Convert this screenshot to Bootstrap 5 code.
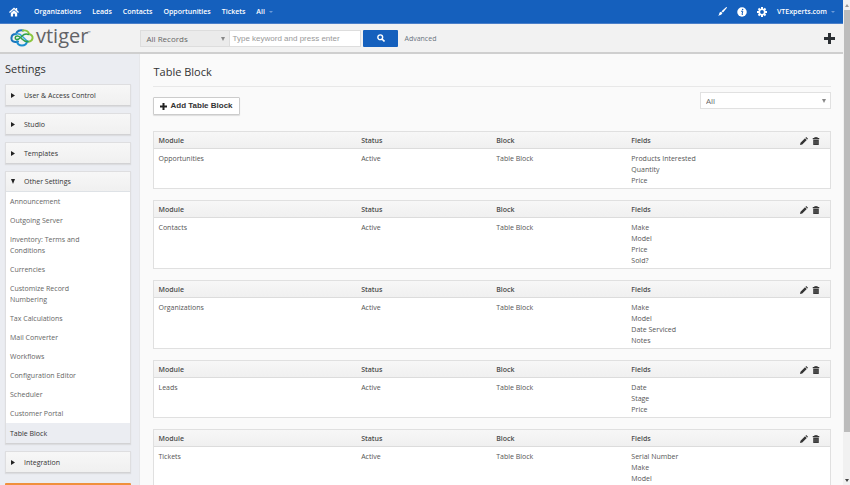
<!DOCTYPE html>
<html lang="en">
<head>
<meta charset="utf-8">
<meta name="viewport" content="width=device-width, initial-scale=1">
<title>Table Block - Settings</title>
<link rel="stylesheet" href="https://cdn.jsdelivr.net/npm/bootstrap@5.3.0/dist/css/bootstrap.min.css">
<style>
body { font-family: "Open Sans", sans-serif; font-size: 7px; line-height: 11px; color: #555; background: #fafafa; }
a { text-decoration: none; }
svg { display: block; flex: none; }
.top-bar { background: #1560bd; height: 24px; padding: 0 8px 0 9px; border-bottom: 1px solid #4a7fc9; }
.top-bar a { color: #fff; font-weight: 600; }
.main-menu { gap: 11px; }
.user-menu { gap: 10px; }
.tiny-caret::after { content: ""; display: inline-block; margin-left: 4px; vertical-align: 1px; border: 2px solid transparent; border-top-color: #6c9ad8; border-bottom: 0; }
.search-bar { height: 30px; background: #f2f2f2; border-bottom: 2px solid #cfcfcf; }
.brand { padding: 0 0 1px 10px; gap: 2px; font-size: 20px; line-height: 24px; color: #626366; }
.brand span { padding-bottom: 3px; }
.brand sup { font-size: 4px; top: -9px; margin-left: -1px; }
.caret-select { border: 1px solid #ddd; border-radius: 0; height: 17px; padding: 0 12px 0 5px; font-size: 8px; line-height: 13px; color: #666; background: #ebebeb url("data:image/svg+xml,%3Csvg xmlns='http://www.w3.org/2000/svg' viewBox='0 0 4 4'%3E%3Cpath d='M0 0h4L2 4z' fill='%23888'/%3E%3C/svg%3E") no-repeat right 4px top 6px / 4px 4px; }
.scope-select { width: 90px; }
.filter-select { width: 131px; background-color: #fff; border-color: #e1e1e1; }
.search-input { width: 131px; height: 17px; border: 1px solid #ddd; border-left: 0; border-radius: 0; padding: 0 2px; font: 8px/13px "Liberation Sans", Arial, sans-serif; }
.search-input::placeholder { color: #999; }
.search-btn { width: 35px; height: 17px; margin-left: 2px; background: #1560bd; border-radius: 1px; }
.search-btn:hover { background: #104e9c; }
.advanced { margin-left: 6px; color: #6a7480; }
.side-panel { background: #ebedf2; padding: 8px 8px 0 5px; border-right: 1px solid #e6e7ea; }
.page-title { font-size: 11px; line-height: 14px; font-weight: 400; color: #333; margin: 0; }
.menu-list { gap: 7px; margin-top: 8px; }
.menu-block { border: 1px solid #dedee0; border-bottom-color: #d2d2d4; background: #fff; box-shadow: 0 1px 1px #dcdde0; }
.menu-toggle { height: 20px; padding: 0 5px; gap: 9px; background: linear-gradient(#f7f7f7, #f0f0f0); color: #333; font-weight: 500; }
.menu-toggle svg { fill: #222; }
.menu-block .menu-item { display: block; padding: 4px 30px 4px 4px; color: #666; }
.menu-block .menu-item.active { background: #ebedf2; color: #333; font-weight: 500; padding: 5px 4px 4px; }
.promo { height: 24px; margin-top: 10px; background: #f0903c; border-radius: 1px; }
.content-panel { padding: 11px 12px 0 13px; }
.title-rule { border-bottom: 1px solid #e8e8e8; padding-bottom: 7px; }
.tools { padding: 5px 0 16px; }
.add-btn { height: 18px; padding: 0 6px; gap: 3px; margin-top: 5px; border: 1px solid #ccc; border-radius: 1px; background: #fff; color: #333; font: bold 8px/12px "Liberation Sans", Arial, sans-serif; box-shadow: 0 1px 1px #ddd; }
.block-table { border: 1px solid #e0e0e0; table-layout: fixed; margin-bottom: 11px; background: #fff; border-collapse: separate; border-spacing: 0; line-height: 11px; --bs-table-bg: transparent; }
.block-table > thead > tr > th { height: 17px; padding: 3px 4px 2px; font-weight: 600; color: #4c4c4c; border-bottom: 1px solid #dcdcdc; background: linear-gradient(#f7f7f7, #f0f0f0); }
.block-table > tbody > tr > td { padding: 4px 4px 2px; color: #555; border: 0; }
.c-module { width: 30%; } .c-mid { width: 20%; } .c-fields { width: 25%; } .c-act { width: 5%; }
.act { gap: 4px; height: 11px; }
.act .btn, .icon-btn { padding: 0; border: 0; line-height: 0; }
.act svg { fill: #333; }
.scroll-track { width: 7px; background: #f1f1f1; padding-left: 1px; }
.scroll-thumb { flex: 0 0 87%; background: #bcbcbc; }
.scroll-arrow { height: 10px; }
</style>
<script src="https://cdn.jsdelivr.net/npm/bootstrap@5.3.0/dist/js/bootstrap.bundle.min.js"></script>
</head>
<body>
<div class="d-flex vh-100 overflow-hidden">
<div class="d-flex flex-column flex-grow-1 overflow-hidden">
  <nav class="top-bar d-flex align-items-center justify-content-between flex-shrink-0" aria-label="Main">
    <div class="main-menu d-flex align-items-center">
      <a href="#" class="me-1" aria-label="Home"><svg width="10" height="10" viewBox="0 0 22 22" fill="#fff"><path d="M11 1 0 11l2 2 9-8 9 8 2-2-4-4V2h-3v2.500z"/><path d="M11 7l-7 6v8h5v-6h4v6h5v-8z"/></svg></a>
      <a href="#">Organizations</a>
      <a href="#">Leads</a>
      <a href="#">Contacts</a>
      <a href="#">Opportunities</a>
      <a href="#">Tickets</a>
      <a href="#" class="tiny-caret">All</a>
    </div>
    <div class="user-menu d-flex align-items-center">
      <a href="#" aria-label="Theme"><svg width="9" height="9" viewBox="0 0 18 18" fill="#fff"><path d="M17 0c1 0 1 1 .5 2L10 11 7 8.500 15.500.8zM6 9.500 8.800 12C8 15.500 4 17.500 0 17c2-1 2-2 2.500-4S4.500 10 6 9.500z"/></svg></a>
      <a href="#" aria-label="Information"><svg width="10" height="10" viewBox="0 0 20 20"><circle cx="10" cy="10" r="9.500" fill="#fff"/><circle cx="11.300" cy="4.800" r="1.500" fill="#1560bd"/><path d="M8 8.500h3.500L10 15h1.500" fill="none" stroke="#1560bd" stroke-width="2"/></svg></a>
      <a href="#" aria-label="Preferences"><svg width="10" height="10" viewBox="0 0 20 20" fill="none" stroke="#fff"><circle cx="10" cy="10" r="5.500" stroke-width="3.400"/><path d="M10 0v4M10 16v4M0 10h4M16 10h4M3 3l3 3M14 14l3 3M17 3l-3 3M6 14l-3 3" stroke-width="4"/></svg></a>
      <a href="#" class="tiny-caret">VTExperts.com</a>
    </div>
  </nav>
  <header class="search-bar d-flex align-items-center flex-shrink-0">
    <a href="#" class="brand col-2 d-flex align-items-center" aria-label="vtiger">
      <svg width="24" height="18" viewBox="0 0 48 36" fill="none" stroke-width="4" stroke-linecap="round">
        <path d="M16 25C8 28 2 24 3 18c0-5 4-8 9-8 2-6 8-9 14-7" stroke="#1b75bb"/>
        <path d="M26 3c6-1 11 2 12 7 5 1 8 5 7 9-1 5-6 7-11 6" stroke="#8cc63f"/>
        <path d="M34 25c-1 5-5 8-10 8s-9-3-10-8" stroke="#1c8fd0"/>
        <path d="M12 10c5-1 9 1 12 4l8 8c2 2 3 3 5 3" stroke="#35a3dc" stroke-width="3"/>
        <path d="M37 11c-5-2-10 0-13 3s-7 8-11 7c-4-1-3-7 1-7 4-1 7 3 10 6s7 6 12 5" stroke="#2d9f49" stroke-width="3"/>
      </svg>
      <span>vtiger<sup>™</sup></span>
    </a>
    <form class="d-flex align-items-center" onsubmit="return false">
      <select class="form-select caret-select scope-select" aria-label="Record type"><option>All Records</option></select>
      <input type="search" class="form-control search-input" placeholder="Type keyword and press enter" aria-label="Keyword">
      <button type="submit" class="btn search-btn d-flex align-items-center justify-content-center p-0 border-0" aria-label="Search"><svg width="8" height="8" viewBox="0 0 16 16" fill="none" stroke="#fff"><circle cx="6.500" cy="6.500" r="4.800" stroke-width="2.800"/><path d="M10 10l5 5" stroke-width="3.200"/></svg></button>
      <a href="#" class="advanced">Advanced</a>
    </form>
    <button type="button" class="btn icon-btn ms-auto me-2" aria-label="Quick create"><svg width="11" height="11" viewBox="0 0 11 11" fill="#2b2f33"><path d="M4 0h3v4h4v3H7v4H4V7H0V4h4z"/></svg></button>
  </header>
  <div class="row g-0 flex-nowrap flex-grow-1">
    <aside class="side-panel col-2">
      <h2 class="page-title">Settings</h2>
      <div class="menu-list d-flex flex-column">
        <div class="menu-block"><button type="button" class="menu-toggle border-0 w-100 d-flex align-items-center"><svg width="4" height="5" viewBox="0 0 4 5"><path d="M0 0l4 2.500L0 5z"/></svg><span>User &amp; Access Control</span></button></div>
        <div class="menu-block"><button type="button" class="menu-toggle border-0 w-100 d-flex align-items-center"><svg width="4" height="5" viewBox="0 0 4 5"><path d="M0 0l4 2.500L0 5z"/></svg><span>Studio</span></button></div>
        <div class="menu-block"><button type="button" class="menu-toggle border-0 w-100 d-flex align-items-center"><svg width="4" height="5" viewBox="0 0 4 5"><path d="M0 0l4 2.500L0 5z"/></svg><span>Templates</span></button></div>
        <div class="menu-block">
          <button type="button" class="menu-toggle border-0 border-bottom w-100 d-flex align-items-center" aria-expanded="true"><svg width="4" height="5" viewBox="0 0 4 5"><path d="M0 0h4L2 5z"/></svg><span>Other Settings</span></button>
          <a href="#" class="menu-item">Announcement</a>
          <a href="#" class="menu-item">Outgoing Server</a>
          <a href="#" class="menu-item">Inventory: Terms and Conditions</a>
          <a href="#" class="menu-item">Currencies</a>
          <a href="#" class="menu-item">Customize Record Numbering</a>
          <a href="#" class="menu-item">Tax Calculations</a>
          <a href="#" class="menu-item">Mail Converter</a>
          <a href="#" class="menu-item">Workflows</a>
          <a href="#" class="menu-item">Configuration Editor</a>
          <a href="#" class="menu-item">Scheduler</a>
          <a href="#" class="menu-item">Customer Portal</a>
          <a href="#" class="menu-item active" aria-current="page">Table Block</a>
        </div>
        <div class="menu-block"><button type="button" class="menu-toggle border-0 w-100 d-flex align-items-center"><svg width="4" height="5" viewBox="0 0 4 5"><path d="M0 0l4 2.500L0 5z"/></svg><span>Integration</span></button></div>
      </div>
      <div class="promo"></div>
    </aside>
    <main class="content-panel col-10">
      <h1 class="page-title title-rule">Table Block</h1>
      <div class="tools d-flex justify-content-between align-items-start">
        <button type="button" class="add-btn d-flex align-items-center"><svg width="7" height="7" viewBox="0 0 7 7" fill="#222"><path d="M2.500 0h2v2.500H7v2H4.500V7h-2V4.500H0v-2h2.500z"/></svg>Add Table Block</button>
        <select class="form-select caret-select filter-select" aria-label="Module filter"><option>All</option></select>
      </div>
      <div id="blocks"></div>
    </main>
  </div>
</div>
<div class="scroll-track d-flex flex-column flex-shrink-0" aria-hidden="true">
  <div class="scroll-arrow d-flex align-items-center justify-content-center"><svg width="4" height="3" viewBox="0 0 4 3" fill="#999"><path d="M2 0l2 3H0z"/></svg></div>
  <div class="scroll-thumb"></div>
  <div class="scroll-arrow mt-auto d-flex align-items-center justify-content-center"><svg width="4" height="3" viewBox="0 0 4 3" fill="#444"><path d="M0 0h4L2 3z"/></svg></div>
</div>
</div>
<script>
const blocks = [
  ["Opportunities", ["Products Interested", "Quantity", "Price"]],
  ["Contacts", ["Make", "Model", "Price", "Sold?"]],
  ["Organizations", ["Make", "Model", "Date Serviced", "Notes"]],
  ["Leads", ["Date", "Stage", "Price"]],
  ["Tickets", ["Serial Number", "Make", "Model"]]
];
document.getElementById("blocks").innerHTML = blocks.map(([name, fields]) => `
<table class="table block-table w-100">
  <thead><tr>
    <th class="c-module">Module</th><th class="c-mid">Status</th><th class="c-mid">Block</th><th class="c-fields">Fields</th>
    <th class="c-act"><div class="act d-flex align-items-center">
      <button type="button" class="btn" aria-label="Edit ${name}"><svg width="8" height="8" viewBox="0 0 16 16"><path d="M0 16l1-4.500L10 2.500 13.500 6 4.500 15zM11 1.500 12.500 0 16 3.500 14.500 5z"/></svg></button>
      <button type="button" class="btn" aria-label="Delete ${name}"><svg width="8" height="8" viewBox="0 0 16 16"><path fill-rule="evenodd" d="M1.500 2H5V0h6v2h3.500v2.500h-13zM6.500 1.500V2h3v-.5zM2.500 5.500h11V16h-11z"/><path d="M5.500 7v7.500M8 7v7.500M10.500 7v7.500" stroke="#888" stroke-width=".8"/></svg></button>
    </div></th>
  </tr></thead>
  <tbody><tr><td>${name}</td><td>Active</td><td>Table Block</td><td>${fields.join("<br>")}</td><td></td></tr></tbody>
</table>`).join("");
</script>
</body>
</html>
